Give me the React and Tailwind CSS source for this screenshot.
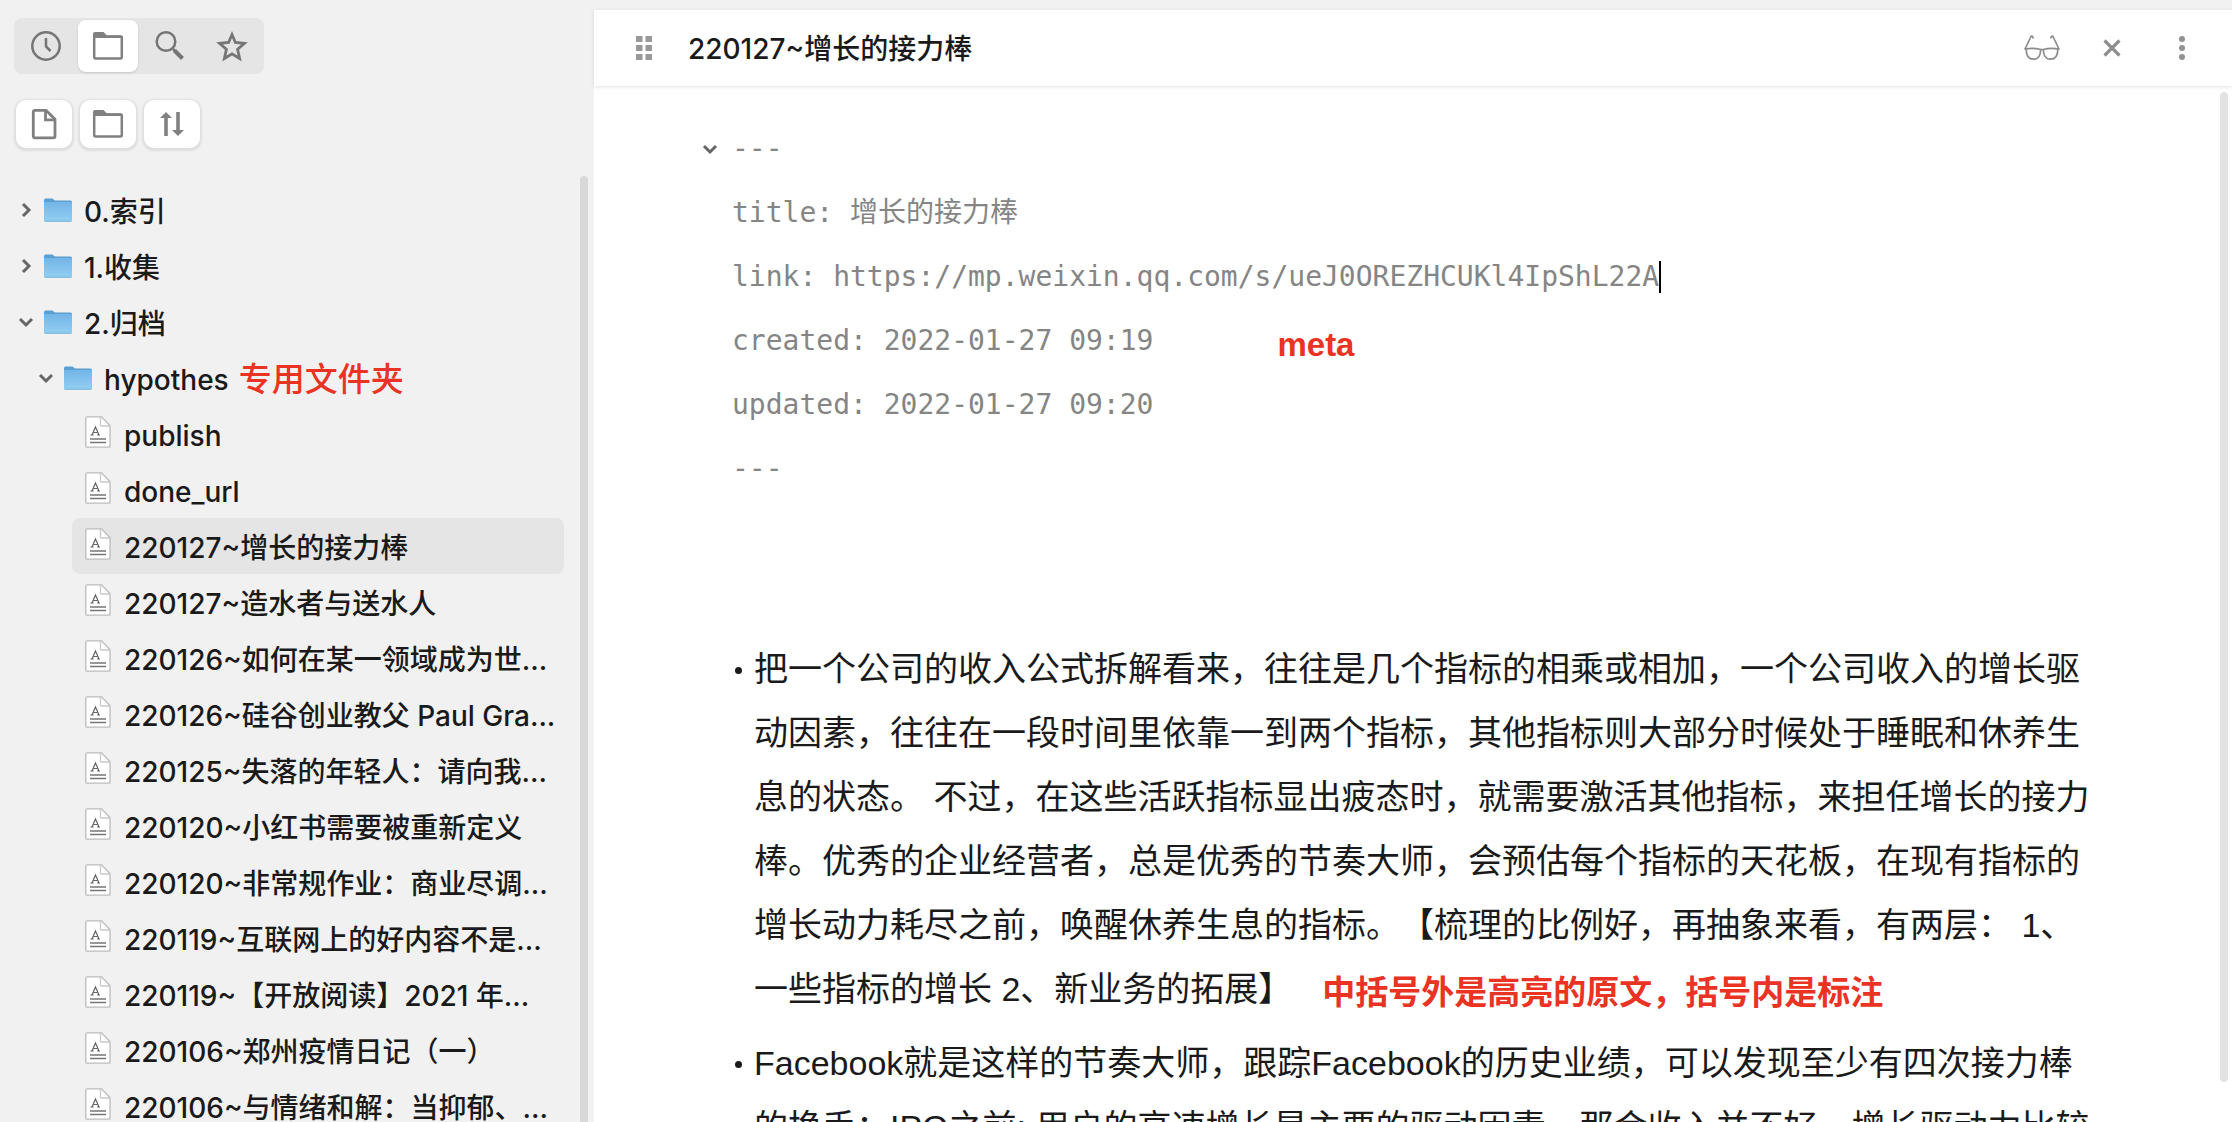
import React, { useState } from 'react';

const FILES = [
  'publish',
  'done_url',
  '220127~增长的接力棒',
  '220127~造水者与送水人',
  '220126~如何在某一领域成为世...',
  '220126~硅谷创业教父 Paul Gra...',
  '220125~失落的年轻人：请向我...',
  '220120~小红书需要被重新定义',
  '220120~非常规作业：商业尽调...',
  '220119~互联网上的好内容不是...',
  '220119~【开放阅读】2021 年...',
  '220106~郑州疫情日记（一）',
  '220106~与情绪和解：当抑郁、...',
];

const FOLDERS = [
  { name: '0.索引', open: false },
  { name: '1.收集', open: false },
  { name: '2.归档', open: true },
];

/* ── Icons ── */
const ClockIcon = () => (
  <svg width="32" height="32" viewBox="0 0 32 32" fill="none" stroke="#757575" strokeWidth="2.5" aria-hidden="true">
    <circle cx="16" cy="16" r="13.7" />
    <path d="M16 8v8.5l4.5 4.5" />
  </svg>
);

const FolderOutlineIcon = () => (
  <svg width="32" height="32" viewBox="0 0 32 32" fill="none" aria-hidden="true">
    <path d="M1 8V4a2 2 0 0 1 2-2h8.5L15 5.500h14a2 2 0 0 1 2 2V8z" fill="#808080" />
    <rect x="2.200" y="6.500" width="27.600" height="22" rx="1.500" stroke="#808080" strokeWidth="2.500" />
  </svg>
);

const SearchIcon = () => (
  <svg width="32" height="32" viewBox="0 0 32 32" fill="none" stroke="#757575" aria-hidden="true">
    <circle cx="12" cy="11.500" r="9.300" strokeWidth="2.500" />
    <path d="M19 19l3 3" strokeWidth="2.500" />
    <path d="M20.500 20.500l8 8" strokeWidth="4" />
  </svg>
);

const StarIcon = () => (
  <svg width="32" height="32" viewBox="0 0 32 32" fill="none" stroke="#757575" strokeWidth="2.800" aria-hidden="true">
    <path d="M16 4.500l3.400 8 9.100.8-6.900 6 2 9.200-7.600-4.700-7.600 4.700 2-9.200-6.900-6 9.100-.8z" />
  </svg>
);

const NewFileIcon = () => (
  <svg width="32" height="32" viewBox="0 0 32 32" fill="none" stroke="#808080" strokeWidth="2.800" aria-hidden="true">
    <path d="M6.500 2.300H18l9 9v17a1.500 1.500 0 0 1-1.500 1.500h-19A1.500 1.500 0 0 1 5.300 28.300V3.800a1.500 1.500 0 0 1 1.200-1.500z" strokeLinejoin="round" />
    <path d="M17.500 2.500v9.300H27" />
  </svg>
);

const SortIcon = () => (
  <svg width="32" height="32" viewBox="0 0 32 32" fill="#808080" aria-hidden="true">
    <path d="M10 4l6 6h-4.200v18H8.200V10H4z" />
    <path d="M22 28l-6-6h4.200V4h3.600v18H28z" />
  </svg>
);

const Chevron = ({ open }) => (
  <svg width="16" height="16" viewBox="0 0 16 16" fill="none" stroke="#666" strokeWidth="3" className="shrink-0" aria-hidden="true">
    <path d={open ? 'M2 5l6 6 6-6' : 'M5 2l6 6-6 6'} />
  </svg>
);

const FolderIcon = () => (
  <svg width="28" height="24" viewBox="0 0 28 24" className="shrink-0" aria-hidden="true">
    <defs>
      <linearGradient id="folderFill" x1="0" y1="0" x2="0" y2="1">
        <stop offset="0" stopColor="#74b5e6" />
        <stop offset="1" stopColor="#92cff5" />
      </linearGradient>
    </defs>
    <path d="M0 2a1.500 1.500 0 0 1 1.500-1.500h7L11 2.500h15.500A1.500 1.500 0 0 1 28 4v4H0z" fill="#5b9fd3" />
    <rect y="4" width="28" height="19.500" rx="1" fill="url(#folderFill)" />
    <path d="M0.500 23.200h27" stroke="#7ab0d2" />
  </svg>
);

const DocIcon = () => (
  <svg width="26" height="32" viewBox="0 0 26 32" className="shrink-0" aria-hidden="true">
    <path d="M2 .8h14.500L25 9.500V30a1.200 1.200 0 0 1-1.200 1.200H2A1.200 1.200 0 0 1 .8 30V2A1.200 1.200 0 0 1 2 .8z" fill="#fff" stroke="#bcbcbc" strokeWidth="1.300" />
    <path d="M15.500 1v8a1 1 0 0 0 1 1H25" fill="none" stroke="#c8c8c8" strokeWidth="1.300" />
    <path d="M7 19L10.500 11 14 19M8.500 16.500h4M5.500 19h3.200M12 19h3" fill="none" stroke="#666" strokeWidth="1.200" />
    <path d="M5 23h16M5 26.500h16" stroke="#777" strokeWidth="1.400" />
  </svg>
);

const GripIcon = () => (
  <svg width="16" height="24" viewBox="0 0 16 24" fill="#999" aria-hidden="true">
    <path d="M0 0h6.500v6H0zM9.500 0H16v6H9.500zM0 9h6.500v6H0zM9.500 9H16v6H9.500zM0 18h6.500v6H0zM9.500 18H16v6H9.500z" />
  </svg>
);

const GlassesIcon = () => (
  <svg width="36" height="26" viewBox="0 0 36 26" fill="none" stroke="#8c8c8c" strokeWidth="1.700" strokeLinejoin="round" aria-hidden="true">
    <path d="M.8 14.500L7 1.500q1-1.500 2.500 2M35.200 14.500L29 1.500q-1-1.500-2.500 2" />
    <path d="M.8 14.200q8-1.800 16 .3h2.400q8-2.100 16-.3" />
    <path d="M2.200 14.500c0 6 2 9.700 7.300 9.700s7-4 7.200-9.500M33.800 14.500c0 6-2 9.700-7.300 9.700s-7-4-7.200-9.500" />
  </svg>
);

const CloseIcon = () => (
  <svg width="18" height="18" viewBox="0 0 18 18" stroke="#8f8f8f" strokeWidth="3.200" aria-hidden="true">
    <path d="M1.500 1.500l15 15M16.500 1.500l-15 15" />
  </svg>
);

const MoreIcon = () => (
  <svg width="6" height="24" viewBox="0 0 6 24" fill="#929292" aria-hidden="true">
    <circle cx="3" cy="3" r="3" />
    <circle cx="3" cy="12" r="3" />
    <circle cx="3" cy="21" r="3" />
  </svg>
);

const TABS = [
  { label: 'Recent', Icon: ClockIcon },
  { label: 'Files', Icon: FolderOutlineIcon },
  { label: 'Search', Icon: SearchIcon },
  { label: 'Starred', Icon: StarIcon },
];

const ACTIONS = [
  { label: 'New note', Icon: NewFileIcon },
  { label: 'New folder', Icon: FolderOutlineIcon },
  { label: 'Sort order', Icon: SortIcon },
];

const Sidebar = ({ selected, onSelect }) => {
  const [tab, setTab] = useState('Files');

  return (
    <aside className="flex w-[594px] shrink-0 flex-col">
      <div className="flex pt-[18px] pl-[14px]">
        <div className="flex gap-[2px] rounded-lg bg-[#e5e5e5] p-[2px]">
          {TABS.map(({ label, Icon }) => (
            <button
              key={label}
              aria-label={label}
              onClick={() => setTab(label)}
              className={`flex h-[52px] w-[60px] items-center justify-center rounded-lg ${
                tab === label ? 'bg-white shadow-sm' : ''
              }`}
            >
              <Icon />
            </button>
          ))}
        </div>
      </div>

      <div className="flex gap-2 pt-[26px] pl-4">
        {ACTIONS.map(({ label, Icon }) => (
          <button
            key={label}
            aria-label={label}
            className="flex h-12 w-14 items-center justify-center rounded-[10px] bg-white shadow-[0_1px_2px_2px_#dfdfdf]"
          >
            <Icon />
          </button>
        ))}
      </div>

      <div className="mt-7 flex min-h-0 flex-1 pr-[6px]">
        <nav className="mt-[6px] min-w-0 flex-1 overflow-hidden pr-4 text-[28px] font-medium">
          {FOLDERS.map((folder) => (
            <button key={folder.name} className="flex h-14 w-full items-center pl-[18px]">
              <Chevron open={folder.open} />
              <span className="ml-[10px]"><FolderIcon /></span>
              <span className="ml-3 pt-1">{folder.name}</span>
            </button>
          ))}
          <button className="flex h-14 w-full items-center pl-[38px]">
            <Chevron open />
            <span className="ml-[10px]"><FolderIcon /></span>
            <span className="ml-3 pt-1">hypothes</span>
            <span className="ml-[10px] pt-1 text-[33px] text-[#ea3323]">专用文件夹</span>
          </button>
          {FILES.map((name) => (
            <button
              key={name}
              onClick={() => onSelect(name)}
              className={`ml-[72px] flex h-14 w-[492px] items-center rounded-lg pl-[13px] whitespace-nowrap ${
                selected === name ? 'bg-[#e5e5e5]' : ''
              }`}
            >
              <span className="pb-1"><DocIcon /></span>
              <span className="ml-[13px] pt-1">{name}</span>
            </button>
          ))}
        </nav>
        <div className="w-2 rounded-t-full bg-[#d9d9d9]" />
      </div>
    </aside>
  );
};

const FrontMatter = () => (
  <div className="font-['DejaVu_Sans_Mono','Noto_Sans_CJK_SC',monospace] text-[28px] leading-[64px] text-[#858585]">
    <div className="-ml-[30px] flex items-center gap-[14px]">
      <Chevron open />
      <span>---</span>
    </div>
    <p>title: 增长的接力棒</p>
    <p className="flex items-center">
      link: https://mp.weixin.qq.com/s/ueJ0OREZHCUKl4IpShL22A
      <span className="h-8 w-[2px] bg-black" />
    </p>
    <p className="flex items-end">
      created: 2022-01-27 09:19
      <span className="ml-[124px] font-['Liberation_Sans',sans-serif] text-[33px] leading-[56px] font-bold text-[#ea3323]">meta</span>
    </p>
    <p>updated: 2022-01-27 09:20</p>
    <p>---</p>
  </div>
);

const Bullet = ({ children }) => (
  <li className="flex">
    <span className="mt-[30px] mr-[12px] ml-[3px] h-[7px] w-[7px] shrink-0 rounded-full bg-[#1a1a1a]" />
    <p>{children}</p>
  </li>
);

const App = () => {
  const [selected, setSelected] = useState('220127~增长的接力棒');

  return (
    <div className="flex h-screen overflow-hidden bg-[#f1f1f1] font-['Inter','Noto_Sans_CJK_SC',sans-serif] text-[#1a1a1a] [text-spacing-trim:space-all]" lang="zh-CN">
      <Sidebar selected={selected} onSelect={setSelected} />

      <main className="mt-[10px] flex min-w-0 flex-1 flex-col bg-white">
        {/* ── Note header ── */}
        <header className="flex h-[76px] shrink-0 items-center pr-[47px] pl-[42px] shadow-[0_1px_4px_rgba(0,0,0,0.12)]">
          <GripIcon />
          <h1 className="ml-9 flex-1 pt-[2px] text-[28px] font-medium">{selected}</h1>
          <div className="flex items-center">
            <button aria-label="Preview"><GlassesIcon /></button>
            <button aria-label="Close" className="ml-[43px]"><CloseIcon /></button>
            <button aria-label="More options" className="ml-[58px]"><MoreIcon /></button>
          </div>
        </header>

        {/* ── Note body ── */}
        <div className="flex min-h-0 flex-1 pt-[6px] pr-1">
          <article className="min-w-0 flex-1 overflow-hidden pt-[25px] pr-[126px] pl-[138px]">
            <FrontMatter />
            <ul className="mt-[136px] flex flex-col gap-[10px] font-['Liberation_Sans','Noto_Sans_CJK_SC',sans-serif] text-[34px] leading-[64px]">
              <Bullet>
                把一个公司的收入公式拆解看来，往往是几个指标的相乘或相加，一个公司收入的增长驱动因素，往往在一段时间里依靠一到两个指标，其他指标则大部分时候处于睡眠和休养生息的状态。 不过，在这些活跃指标显出疲态时，就需要激活其他指标，来担任增长的接力棒。优秀的企业经营者，总是优秀的节奏大师，会预估每个指标的天花板，在现有指标的增长动力耗尽之前，唤醒休养生息的指标。【梳理的比例好，再抽象来看，有两层： 1、一些指标的增长 2、新业务的拓展】
                <span className="ml-[30px] align-[-3px] text-[33px] leading-none font-bold text-[#ea3323]">中括号外是高亮的原文，括号内是标注</span>
              </Bullet>
              <Bullet>
                Facebook就是这样的节奏大师，跟踪Facebook的历史业绩，可以发现至少有四次接力棒的换手：IPO之前: 用户的高速增长是主要的驱动因素，那会收入并不好，增长驱动力比较
              </Bullet>
            </ul>
          </article>
          <div className="mb-10 w-2 rounded-full bg-[#e3e3e3]" />
        </div>
      </main>
    </div>
  );
};

export default App;
